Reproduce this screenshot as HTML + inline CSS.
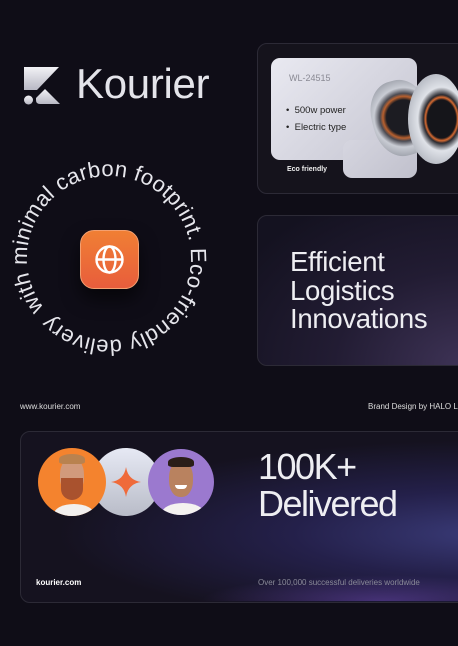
<!DOCTYPE html>
<html><head><meta charset="utf-8"><style>
*{margin:0;padding:0;box-sizing:border-box}
body{width:458px;height:646px;background:#0f0d17;overflow:hidden;position:relative;font-family:"Liberation Sans",sans-serif;color:#e8e8ee}
.abs{position:absolute}
.card{position:absolute;border:1px solid #2c2a36;border-radius:10px}
</style></head><body>

<!-- Logo -->
<svg class="abs" style="left:20px;top:64px" width="44" height="44" viewBox="20 64 44 44">
<defs><linearGradient id="lg" x1="0" y1="0" x2="0" y2="1"><stop offset="0" stop-color="#f2f2f6"/><stop offset="1" stop-color="#b8b8c4"/></linearGradient></defs>
<path d="M24 67 H59 L37 90 H24 Z" fill="url(#lg)"/>
<circle cx="28.5" cy="100" r="4.5" fill="url(#lg)"/>
<path d="M36 98 L45 89 L60 104 H40 Q36 104 36 100 Z" fill="url(#lg)"/>
</svg>
<div class="abs" style="left:76px;top:60px;font-size:42px;color:#e4e4ea;letter-spacing:-0.3px">Kourier</div>

<!-- circular text -->
<svg class="abs" style="left:0;top:160px" width="230" height="200" viewBox="0 160 230 200">
<defs><path id="circ" d="M44,308 A82,82 0 1,1 174,308 A82,82 0 0,1 44,308"/></defs>
<text font-family="Liberation Sans, sans-serif" font-size="22" fill="#e6e6ec" textLength="505" lengthAdjust="spacing"><textPath href="#circ" startOffset="0">with minimal carbon footprint.  Eco-friendly delivery</textPath></text>
</svg>
<div class="abs" style="left:80px;top:230px;width:59px;height:59px;border-radius:14px;background:linear-gradient(#f07f34,#e85d3c);box-shadow:0 10px 18px rgba(0,0,0,.6);border:1px solid #f4a070"></div>
<svg class="abs" style="left:93px;top:243px" width="33" height="33" viewBox="0 0 33 33" fill="none" stroke="#fff" stroke-width="2.4">
<circle cx="16.5" cy="16.5" r="13"/><ellipse cx="16.5" cy="16.5" rx="6" ry="13"/><path d="M3.5 16.5H29.5"/>
</svg>

<!-- card 1 -->
<div class="card" style="left:257px;top:43px;width:210px;height:151px;background:#15131c"></div>
<div class="abs" style="left:271px;top:58px;width:146px;height:102px;border-radius:9px;background:linear-gradient(135deg,#e9e9f1,#c4c4d0)"></div>
<div class="abs" style="left:343px;top:140px;width:74px;height:38px;border-radius:9px;background:linear-gradient(135deg,#d6d6e0,#c0c0cc)"></div>
<div class="abs" style="left:289px;top:73px;font-size:9px;color:#8a8a94">WL-24515</div>
<div class="abs" style="left:286px;top:102px;font-size:9.5px;color:#222;line-height:17px">•&nbsp; 500w power<br>•&nbsp; Electric type</div>
<div class="abs" style="left:287px;top:166px;font-size:7px;color:#eee;font-weight:bold">Eco friendly</div>
<!-- motor -->
<div class="abs" style="left:372px;top:80px;width:58px;height:76px;border-radius:45%;background:radial-gradient(circle at 55% 50%,#1c1c22 35%,#b8602e 42%,#4a4a52 48%,#c9ccd4 60%,#8a8e98 90%);transform:rotate(-15deg)"></div>
<div class="abs" style="left:408px;top:74px;width:56px;height:90px;border-radius:50%;background:radial-gradient(ellipse at 60% 50%,#15151a 30%,#d76a30 34%,#2a2a30 38%,#dfe2e8 50%,#a6aab4 85%)"></div>

<!-- card 2 -->
<div class="card" style="left:257px;top:215px;width:210px;height:151px;background:radial-gradient(ellipse at 100% 100%,#3e3356 0%,#221c33 45%,#141220 90%)"></div>
<div class="abs" style="left:290px;top:248px;font-size:27.5px;line-height:28.5px;color:#eeeef2;letter-spacing:-0.3px">Efficient<br>Logistics<br>Innovations</div>

<div class="abs" style="left:20px;top:402px;font-size:8px;color:#ddd">www.kourier.com</div>
<div class="abs" style="left:368px;top:402px;font-size:8px;color:#ddd;white-space:nowrap">Brand Design by HALO Lab</div>

<!-- bottom card -->
<div class="card" style="left:20px;top:431px;width:450px;height:172px;background:radial-gradient(ellipse at 105% 60%,#3a3b78 0%,#24204a 30%,#15121f 65%),#14111d"></div>
<div class="abs" style="left:200px;top:575px;width:260px;height:26px;background:radial-gradient(ellipse at 70% 100%,rgba(120,80,200,.45),transparent 70%)"></div>
<div class="abs" style="left:92px;top:448px;width:68px;height:68px;border-radius:50%;background:linear-gradient(#e6e9f4,#b9bcc8)"></div>
<svg class="abs" style="left:110px;top:466px" width="32" height="32" viewBox="0 0 32 32"><path d="M16 1 Q18 14 31 16 Q18 18 16 31 Q14 18 1 16 Q14 14 16 1Z" fill="#ef6a3a"/></svg>
<div class="abs" style="left:38px;top:448px;width:68px;height:68px;border-radius:50%;background:#f4832e;overflow:hidden">
 <div class="abs" style="left:16px;top:56px;width:40px;height:20px;border-radius:50% 50% 0 0;background:#f2f0ee"></div>
 <div class="abs" style="left:22px;top:10px;width:24px;height:36px;border-radius:45%;background:#d19a7c"></div>
 <div class="abs" style="left:23px;top:30px;width:22px;height:22px;border-radius:0 0 50% 50%;background:#a9522e"></div>
 <div class="abs" style="left:21px;top:6px;width:26px;height:10px;border-radius:50% 50% 20% 20%;background:#b9824f"></div>
</div>
<div class="abs" style="left:148px;top:449px;width:66px;height:66px;border-radius:50%;background:#9b79cf;overflow:hidden">
 <div class="abs" style="left:14px;top:54px;width:42px;height:20px;border-radius:50% 50% 0 0;background:#f4f2f0"></div>
 <div class="abs" style="left:21px;top:12px;width:24px;height:36px;border-radius:45%;background:#b9825f"></div>
 <div class="abs" style="left:20px;top:8px;width:26px;height:10px;border-radius:50% 50% 20% 20%;background:#2a1e18"></div>
 <div class="abs" style="left:27px;top:36px;width:12px;height:4px;border-radius:0 0 6px 6px;background:#fff"></div>
</div>
<div class="abs" style="left:258px;top:448px;font-size:36px;line-height:37px;color:#eeeef2;letter-spacing:-1.5px">100K+<br>Delivered</div>
<div class="abs" style="left:36px;top:578px;font-size:8px;color:#fff;font-weight:bold">kourier.com</div>
<div class="abs" style="left:258px;top:578px;font-size:8px;color:#8a8a98;white-space:nowrap">Over 100,000 successful deliveries worldwide</div>

</body></html>
